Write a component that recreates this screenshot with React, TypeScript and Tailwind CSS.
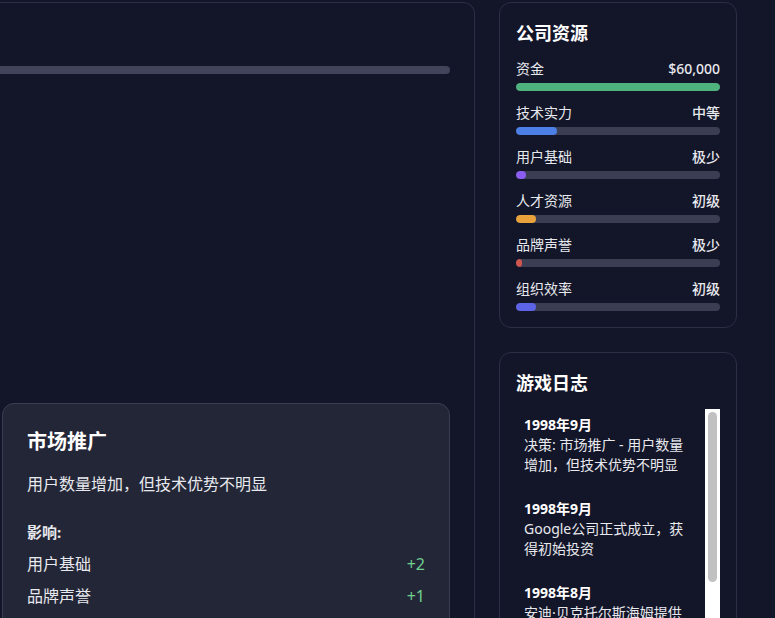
import React from 'react';

interface Resource {
  label: string;
  value: string;
  pct: number;
  color: string;
}

const resources: Resource[] = [
  { label: '资金', value: '$60,000', pct: 100, color: 'bg-[#4fb37e]' },
  { label: '技术实力', value: '中等', pct: 20, color: 'bg-[#4c7fe6]' },
  { label: '用户基础', value: '极少', pct: 5, color: 'bg-[#8a5cf0]' },
  { label: '人才资源', value: '初级', pct: 10, color: 'bg-[#e9a23b]' },
  { label: '品牌声誉', value: '极少', pct: 3, color: 'bg-[#d0554f]' },
  { label: '组织效率', value: '初级', pct: 10, color: 'bg-[#5c63e6]' },
];

const logs = [
  { date: '1998年9月', text: '决策: 市场推广 - 用户数量增加，但技术优势不明显' },
  { date: '1998年9月', text: 'Google公司正式成立，获得初始投资' },
  { date: '1998年8月', text: '安迪·贝克托尔斯海姆提供10万美元天使投资' },
];

const effects = [
  { label: '用户基础', delta: '+2' },
  { label: '品牌声誉', delta: '+1' },
  { label: '资金', delta: '-5000' },
];

export default function App() {
  return (
    <div
      className="h-[618px] w-[775px] overflow-hidden bg-[#131528] text-[#e8e9ee]"
      style={{ fontFamily: '"Noto Sans", "Noto Sans CJK SC", sans-serif' }}
    >
      <div className="flex gap-6 pt-[2px]">
        {/* Main panel, left part scrolled out of view */}
        <div className="w-[475px] h-[640px] shrink-0 rounded-tr-xl border-t border-r border-[#2b2e44] pr-6 pl-[2px] pt-[63px]">
          <div className="-ml-[2px] h-2 rounded-r-full bg-[#41445a]" />
          <div className="mt-[329px] rounded-xl border border-[#3a3d52] bg-[#232636] p-6">
            <h3 className="text-xl font-bold leading-7 text-white mb-4">市场推广</h3>
            <p className="text-base leading-6 mb-[26px]">用户数量增加，但技术优势不明显</p>
            <div className="text-[15px] font-bold leading-5 mb-[10px]">影响:</div>
            <div className="space-y-2">
              {effects.map((e) => (
                <div key={e.label} className="flex justify-between text-base leading-6">
                  <span>{e.label}</span>
                  <span className={e.delta.startsWith('+') ? 'text-[#6fcf8f]' : 'text-[#e06b6b]'}>{e.delta}</span>
                </div>
              ))}
            </div>
          </div>
        </div>

        {/* Sidebar */}
        <div className="w-[238px] shrink-0 space-y-6">
          <div className="rounded-xl border border-[#2b2e44] p-4">
            <h3 className="text-lg font-bold leading-7 text-white mb-3">公司资源</h3>
            <div className="space-y-3">
              {resources.map((r) => (
                <div key={r.label}>
                  <div className="flex justify-between text-sm leading-5 mb-1">
                    <span>{r.label}</span>
                    <span className="font-medium">{r.value}</span>
                  </div>
                  <div className="h-2 rounded-full bg-[#3b3e52] overflow-hidden">
                    <div className={`h-full rounded-full ${r.color}`} style={{ width: `${r.pct}%` }} />
                  </div>
                </div>
              ))}
            </div>
          </div>

          <div className="h-[400px] rounded-xl border border-[#2b2e44] p-4">
            <h3 className="text-lg font-bold leading-7 text-white mb-3">游戏日志</h3>
            <div className="flex h-[320px]">
              <div className="flex-1 px-2 pt-[6px] space-y-6">
                {logs.map((l, i) => (
                  <div key={i} className="text-sm leading-5">
                    <div className="font-bold text-white">{l.date}</div>
                    <div>{l.text}</div>
                  </div>
                ))}
              </div>
              <div className="w-[15px] bg-white pt-[3px] flex justify-center">
                <div className="h-[170px] w-[9px] rounded-full bg-[#c1c1c1]" />
              </div>
            </div>
          </div>
        </div>
      </div>
    </div>
  );
}
